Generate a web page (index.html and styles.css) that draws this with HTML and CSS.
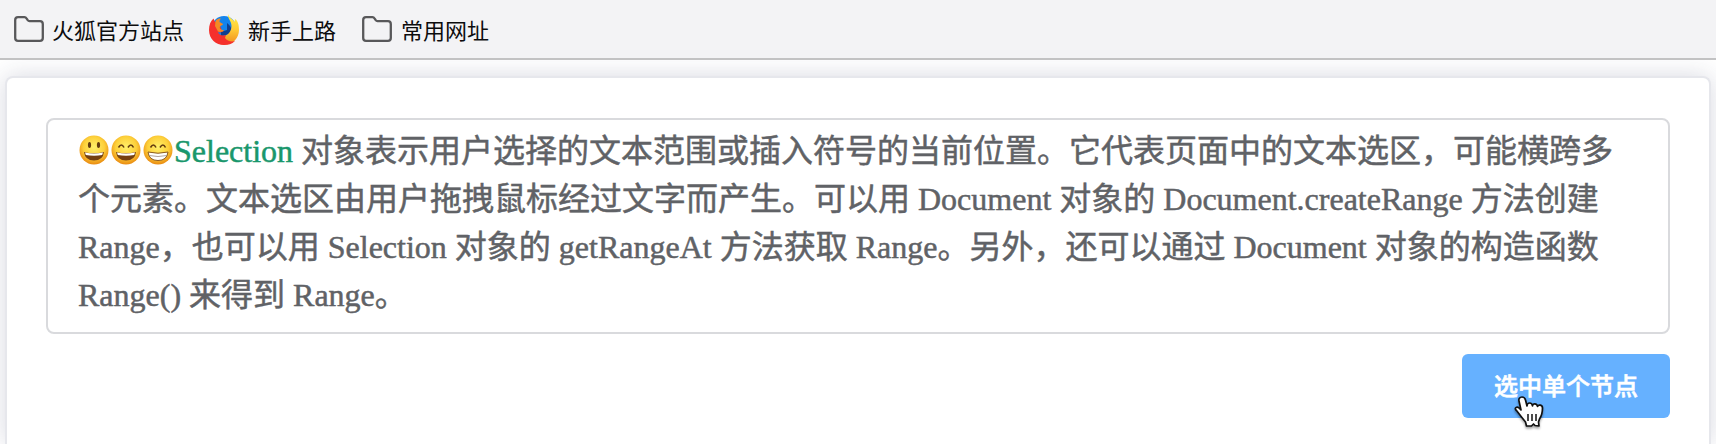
FILE: index.html
```html
<!DOCTYPE html>
<html lang="zh-CN">
<head>
<meta charset="utf-8">
<title>Selection</title>
<link rel="stylesheet" href="styles.css">
</head>
<body>
<svg class="defs" width="0" height="0" aria-hidden="true">
  <defs>
    <radialGradient id="skin" cx=".5" cy=".4" r=".6"><stop offset="0" stop-color="#fff06a"/><stop offset=".6" stop-color="#fdd03a"/><stop offset="1" stop-color="#e98a10"/></radialGradient>
    <linearGradient id="flame" x1="0" y1="0" x2="0" y2="1"><stop offset="0" stop-color="#fff04a"/><stop offset=".5" stop-color="#ffcb35"/><stop offset="1" stop-color="#f08a1c"/></linearGradient>
    <symbol id="folder" viewBox="0 0 30 26"><path d="M4 1.200h6.500c1 0 1.500.4 2 1.200l1.200 1.800c.5.700 1 1 1.800 1H26c1.800 0 2.800 1 2.800 2.800V22c0 1.800-1 2.800-2.800 2.800H4c-1.800 0-2.800-1-2.800-2.800V4C1.200 2.200 2.200 1.200 4 1.200z" fill="none" stroke="#58585a" stroke-width="2.300"/></symbol>
  </defs>
</svg>
<nav class="bookmarks">
  <span class="bookmark"><svg class="folder"><use href="#folder"/></svg>火狐官方站点</span>
  <span class="bookmark firefox-link"><svg class="firefox" viewBox="0 0 30 31">
    <circle cx="15" cy="14.500" r="12.500" fill="#1483ec"/>
    <path d="M18 9c4 3 6 7 3 11l-9 2v-4l6-2z" fill="#123f8e"/>
    <path d="M19 0c-.5 5 3.500 7 3.500 12 0 5-3 9-7.500 10l-4 8c10 3 19-4 19-14 0-5-1-9-4-11l-.5 3C24 5 20 4 19 0z" fill="url(#flame)"/>
    <path d="M4.500 4.500C1.500 7 0 11 0 16c0 9 7 15 15 15 4 0 8-1 11-4-4 1-8 0-10-3l1-3c-4 1-7 0-8-3 2 1 5 0 6-1.500-2 0-3-.5-3-2.500L9 8 6 8z" fill="#f5302c"/>
    <path d="M6.500 7c1.500-2 3-2.500 5.500-2.500-1 1-1.500 2-1.500 3.500l3.500 2c0 1-2 1.500-3 2.500-1 2 1 3.500 4 3.500-1 2-4 2.500-6 1.500L6 12z" fill="#f28a25"/>
  </svg>新手上路</span>
  <span class="bookmark"><svg class="folder"><use href="#folder"/></svg>常用网址</span>
</nav>
<main class="page">
  <section class="card">
    <p class="textbox"><svg class="emoji" viewBox="0 0 32 32"><circle cx="16" cy="16" r="14.500" fill="url(#skin)"/><ellipse cx="11.500" cy="11" rx="1.600" ry="3" fill="#643c10"/><ellipse cx="20.500" cy="11" rx="1.600" ry="3" fill="#643c10"/><path d="M6 18q10 2.500 20 0-1 8.500-10 8.500T6 18z" fill="#754010"/><path d="M7 18.500q9 2 18 0l-.8 2.500q-8 1.500-16.400 0z" fill="#fff"/></svg><svg class="emoji" viewBox="0 0 32 32"><circle cx="16" cy="16" r="14.500" fill="url(#skin)"/><path d="M8.500 13.500q3-5 5.500 0M18 13.500q3-5 5.500 0" fill="none" stroke="#643c10" stroke-width="1.600"/><path d="M6 18q10 2.500 20 0-1 8.500-10 8.500T6 18z" fill="#754010"/><path d="M7 18.500q9 2 18 0l-.8 2.500q-8 1.500-16.400 0z" fill="#fff"/></svg><svg class="emoji" viewBox="0 0 32 32"><circle cx="16" cy="16" r="14.500" fill="url(#skin)"/><path d="M8.500 13.500q3-5 5.500 0M18 13.500q3-5 5.500 0" fill="none" stroke="#643c10" stroke-width="1.600"/><path d="M6 18q10 2.500 20 0-1 8.500-10 8.500T6 18z" fill="#fff" stroke="#8a5a20" stroke-width="1"/><path d="M7 21.500q9 2 18 0" fill="none" stroke="#9a8a80" stroke-width=".8"/></svg><span class="highlight">Selection</span> 对象表示用户选择的文本范围或插入符号的当前位置。它代表页面中的文本选区，可能横跨多<br>个元素。文本选区由用户拖拽鼠标经过文字而产生。可以用 Document 对象的 Document.createRange 方法创建<br>Range，也可以用 Selection 对象的 getRangeAt 方法获取 Range。另外，还可以通过 Document 对象的构造函数<br>Range() 来得到 Range。</p>
    <button class="select-button" type="button">选中单个节点<svg class="cursor" viewBox="0 0 32 34"><path d="M8 2c2 0 3 1 3.500 3l1.500 6c0-4 5-4 5.500 0 0-3 4.500-3 5 .5 1-2.500 5-1.500 5 1.500 0 6-1 8-3 11l-1 3 .5 4-4-.5-1.500-1.500-2 2h-5l-1-4-4-5-5-6.500C-.5 13 3 11 5 13l2 2L5 6c-.5-2 .5-4 3-4z" fill="#fff" stroke="#111" stroke-width="1.700" stroke-linejoin="round"/><path d="M14 19v7M18 19v7M22 19v7" stroke="#111" stroke-width="1.500"/></svg></button>
  </section>
</main>
</body>
</html>
```
FILE: styles.css
```css
* { box-sizing: border-box; }
body { margin: 0; background: #fff; overflow: hidden; font-family: "Liberation Sans", "Noto Sans CJK SC", sans-serif; }
.defs { position: absolute; }
.bookmarks { display: flex; align-items: center; gap: 26px; height: 60px; padding: 0 14px; background: #f3f3f5; border-bottom: 2px solid #c2c2c3; font-family: "Noto Sans CJK SC", sans-serif; font-size: 22px; color: #0c0c0d; }
.bookmark { display: flex; align-items: center; gap: 9px; height: 58px; }
.bookmark:first-child { gap: 8px; }
.firefox-link { margin-left: -1px; }
.folder { width: 30px; height: 26px; }
.firefox { width: 30px; height: 31px; }
.page { height: 384px; padding: 16px 5px 0; overflow: hidden; }
.card { display: flex; flex-direction: column; align-items: flex-end; height: 368px; padding: 40px 39px 0; background: #fff; border: 2px solid #e6e7ec; border-bottom: 0; border-radius: 8px 8px 0 0; box-shadow: 0 0 24px rgba(40, 44, 90, .18); }
.textbox { width: 100%; height: 216px; margin: 0 0 20px; padding: 7px 30px; border: 2px solid #d9dadd; border-radius: 8px; font: 32px/48px "Liberation Serif", "Noto Sans CJK SC", serif; color: #606266; white-space: nowrap; -webkit-text-stroke: .5px currentColor; }
.emoji { width: 32px; height: 32px; vertical-align: -4px; }
.highlight { color: #1a976c; }
.select-button { position: relative; width: 208px; height: 64px; padding: 0 0 2px; border: 0; border-radius: 6px; background: #66b1ff; color: #fff; font: 500 24px/62px "Noto Sans CJK SC", sans-serif; -webkit-text-stroke: .6px currentColor; }
.cursor { position: absolute; left: 52px; top: 41px; width: 32px; height: 34px; filter: drop-shadow(0 2px 1px rgba(0, 0, 0, .35)); }
```
